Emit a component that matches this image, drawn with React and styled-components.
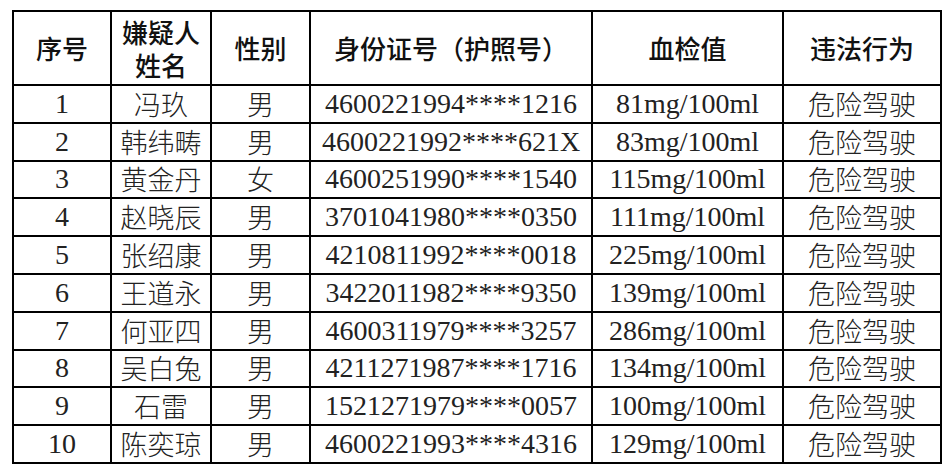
import React from "react";
import styled, { createGlobalStyle } from "styled-components";

const rows = [
  ["1", "冯玖", "男", "4600221994****1216", "81mg/100ml", "危险驾驶"],
  ["2", "韩纬畴", "男", "4600221992****621X", "83mg/100ml", "危险驾驶"],
  ["3", "黄金丹", "女", "4600251990****1540", "115mg/100ml", "危险驾驶"],
  ["4", "赵晓辰", "男", "3701041980****0350", "111mg/100ml", "危险驾驶"],
  ["5", "张绍康", "男", "4210811992****0018", "225mg/100ml", "危险驾驶"],
  ["6", "王道永", "男", "3422011982****9350", "139mg/100ml", "危险驾驶"],
  ["7", "何亚四", "男", "4600311979****3257", "286mg/100ml", "危险驾驶"],
  ["8", "吴白兔", "男", "4211271987****1716", "134mg/100ml", "危险驾驶"],
  ["9", "石雷", "男", "1521271979****0057", "100mg/100ml", "危险驾驶"],
  ["10", "陈奕琼", "男", "4600221993****4316", "129mg/100ml", "危险驾驶"],
];

const widths = [98, 100, 99, 282, 191, 158];

const App = () => {
  return (
    <Page>
      <GlobalStyle />
      <Table>
        <colgroup>
          {widths.map((w, i) => (
            <col key={i} style={{ width: w }} />
          ))}
        </colgroup>
        <thead>
          <HeadRow>
            <Th>序号</Th>
            <Th>
              <HeadLine>嫌疑人</HeadLine>
              <HeadLine>姓名</HeadLine>
            </Th>
            <Th>性别</Th>
            <Th>身份证号（护照号）</Th>
            <Th>血检值</Th>
            <Th>违法行为</Th>
          </HeadRow>
        </thead>
        <tbody>
          {rows.map((r) => (
            <Row key={r[0]}>
              <Td $latin>{r[0]}</Td>
              <Td>{r[1]}</Td>
              <Td>{r[2]}</Td>
              <Td $latin>{r[3]}</Td>
              <Td $latin>{r[4]}</Td>
              <Td>{r[5]}</Td>
            </Row>
          ))}
        </tbody>
      </Table>
    </Page>
  );
};

const GlobalStyle = createGlobalStyle`
  body {
    margin: 0;
    background: #ffffff;
  }
`;

const Page = styled.div`
  width: 952px;
  height: 476px;
  padding: 10px 0 0 12px;
  box-sizing: border-box;
  background: #ffffff;
`;

const Table = styled.table`
  border-collapse: collapse;
  table-layout: fixed;
  width: 928px;
  border: 2px solid #000;
  color: #1a1a1a;
`;

const HeadRow = styled.tr`
  height: 74px;
`;

const Row = styled.tr`
  height: 37.8px;
`;

const Th = styled.th`
  border: 2px solid #000;
  padding: 0;
  text-align: center;
  vertical-align: middle;
  font-family: "Noto Sans CJK SC", sans-serif;
  font-size: 26px;
  font-weight: 500;
  line-height: 34px;
  color: #111;
`;

const HeadLine = styled.div`
  height: 33px;
  line-height: 33px;
  overflow: visible;
`;

const Td = styled.td`
  border: 2px solid #000;
  padding: 0;
  text-align: center;
  vertical-align: middle;
  white-space: nowrap;
  font-family: ${(p) =>
    p.$latin
      ? `"Liberation Serif", "Noto Sans CJK SC", serif`
      : `"Noto Sans CJK SC", sans-serif`};
  font-size: ${(p) => (p.$latin ? "28px" : "27px")};
  font-weight: ${(p) => (p.$latin ? 400 : 300)};
  line-height: 32px;
  color: #222;
`;

export default App;
